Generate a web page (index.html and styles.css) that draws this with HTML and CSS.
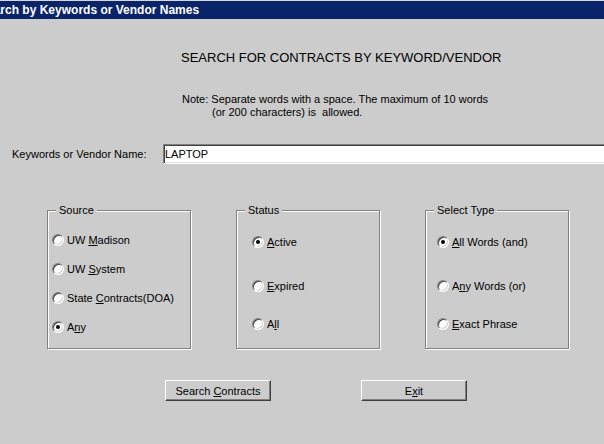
FILE: index.html
```html
<html lang="en">
<head>
    <meta charset="UTF-8">
    <title>Search by Keywords or Vendor Names</title>
    <link rel="stylesheet" href="styles.css">
</head>
<body>
    <div class="titlebar">Search by Keywords or Vendor Names</div>

    <div class="form">
        <h1 class="heading">SEARCH FOR CONTRACTS BY KEYWORD/VENDOR</h1>

        <div class="note">
            <div>Note: Separate words with a space. The maximum of 10 words</div>
            <div class="note-indent">(or 200 characters) is &nbsp;allowed.</div>
        </div>

        <div class="keyword-row">
            <label class="keyword-label" for="keywords">Keywords or Vendor Name:</label>
            <input type="text" id="keywords" class="keyword-input" value="LAPTOP">
        </div>

        <div class="groups">
            <fieldset class="group source">
                <legend>Source</legend>
                <div class="options">
                    <div class="opt"><span class="radio"></span><span>UW <u>M</u>adison</span></div>
                    <div class="opt"><span class="radio"></span><span>UW <u>S</u>ystem</span></div>
                    <div class="opt"><span class="radio"></span><span>State <u>C</u>ontracts(DOA)</span></div>
                    <div class="opt"><span class="radio on"></span><span>A<u>n</u>y</span></div>
                </div>
            </fieldset>

            <fieldset class="group status">
                <legend>Status</legend>
                <div class="options">
                    <div class="opt"><span class="radio on"></span><span><u>A</u>ctive</span></div>
                    <div class="opt"><span class="radio"></span><span><u>E</u>xpired</span></div>
                    <div class="opt"><span class="radio"></span><span>A<u>l</u>l</span></div>
                </div>
            </fieldset>

            <fieldset class="group type">
                <legend>Select Type</legend>
                <div class="options">
                    <div class="opt"><span class="radio on"></span><span><u>A</u>ll Words (and)</span></div>
                    <div class="opt"><span class="radio"></span><span>A<u>n</u>y Words (or)</span></div>
                    <div class="opt"><span class="radio"></span><span><u>E</u>xact Phrase</span></div>
                </div>
            </fieldset>
        </div>

        <div class="buttons">
            <button class="btn">Search <u>C</u>ontracts</button>
            <button class="btn">E<u>x</u>it</button>
        </div>
    </div>
</body>
</html>
```

FILE: styles.css
```css
* {
    margin: 0;
    padding: 0;
    box-sizing: border-box;
}
body {
    background: #cccccc;
    font-family: "Liberation Sans", Arial, sans-serif;
    font-size: 11px;
    color: #000;
    overflow: hidden;
}
.titlebar {
    border-top: 1px solid #d8d8d8;
    height: 19px;
    padding-top: 1px;
    line-height: 17px;
    background: #0a246a;
    color: #fff;
    font-weight: bold;
    font-size: 12px;
    text-indent: -21px;
    white-space: nowrap;
    overflow: hidden;
}
.heading {
    margin-top: 31px;
    padding-left: 181px;
    font-size: 13px;
    font-weight: normal;
    line-height: 16px;
}
.note {
    margin-top: 27px;
    padding-left: 182px;
    line-height: 13px;
}
.note-indent {
    padding-left: 30px;
}
.keyword-row {
    display: flex;
    align-items: center;
    margin-top: 25px;
    padding-left: 12px;
}
.keyword-label {
    width: 151px;
    flex-shrink: 0;
}
.keyword-input {
    flex-shrink: 0;
    width: 460px;
    height: 20px;
    padding: 0 1px;
    font: 11px "Liberation Sans", Arial, sans-serif;
    color: #000;
    background: #fff;
    outline: none;
    border: 1px solid;
    border-color: #808080 #fff #fff #808080;
    box-shadow: inset 1px 1px 0 #404040, inset -1px -1px 0 #e0e0e0;
}
.groups {
    display: flex;
    gap: 45px;
    margin-top: 40px;
    padding-left: 47px;
}
.group {
    width: 144px;
    height: 145px;
    border: 1px solid #808080;
    box-shadow: 1px 1px 0 #fff, inset 1px 1px 0 #fff;
}
.group legend {
    margin-left: 8px;
    padding: 0 3px;
    line-height: 13px;
    background: #cccccc;
}
.options {
    display: flex;
    flex-direction: column;
}
.opt {
    display: flex;
    align-items: center;
    gap: 3px;
    height: 14px;
    white-space: nowrap;
}
.source .options {
    padding: 16px 0 0 4px;
    gap: 15px;
}
.status .options {
    padding: 18px 0 0 15px;
}
.type .options {
    padding: 18px 0 0 11px;
}
.status .opt:nth-child(2),
.type .opt:nth-child(2) {
    margin-top: 30px;
}
.status .opt:nth-child(3),
.type .opt:nth-child(3) {
    margin-top: 24px;
}
.radio {
    position: relative;
    width: 12px;
    height: 12px;
    flex-shrink: 0;
    border-radius: 50%;
    background: #fff;
    border: 1px solid;
    border-color: #808080 #fff #fff #808080;
    box-shadow: inset 1px 1px 0 #404040, inset -1px -1px 0 #d4d0c8;
}
.radio.on::after {
    content: "";
    position: absolute;
    left: 3px;
    top: 3px;
    width: 4px;
    height: 4px;
    border-radius: 50%;
    background: #000;
}
.buttons {
    display: flex;
    gap: 90px;
    margin-top: 31px;
    padding-left: 165px;
}
.btn {
    width: 106px;
    height: 21px;
    font: 11px "Liberation Sans", Arial, sans-serif;
    color: #000;
    background: #cccccc;
    border: 1px solid;
    border-color: #fff #404040 #404040 #fff;
    box-shadow: inset -1px -1px 0 #808080;
}
```
